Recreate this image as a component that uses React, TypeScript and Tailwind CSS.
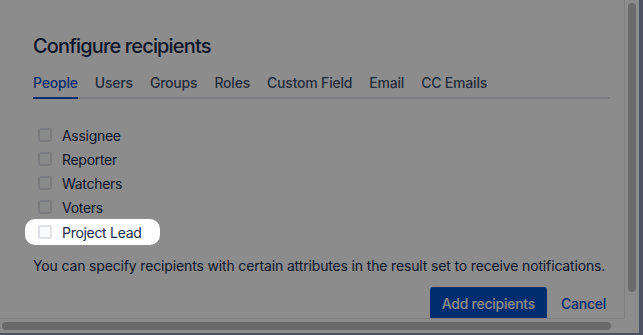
import React from "react";

const tabs = ["People", "Users", "Groups", "Roles", "Custom Field", "Email", "CC Emails"];
const people = ["Assignee", "Reporter", "Watchers", "Voters"];

function Checkbox() {
  return <span className="w-[14px] h-[14px] shrink-0 rounded-[3px] border-2 border-[#dfe1e6] bg-[#fafbfc]" />;
}

export default function App() {
  return (
    <div
      className="relative w-[643px] h-[335px] overflow-hidden bg-white flex flex-col text-[#172b4d]"
      style={{ fontFamily: "Inter, 'Noto Sans', sans-serif" }}
    >
      <div className="flex h-[333px]">
        <div className="w-[639px] flex flex-col">
          <div className="flex h-[322px]">
            {/* dialog body */}
            <div className="w-[625px] h-[319px] border-r border-b border-[#e7e7e7] overflow-hidden pl-[33px] pr-[14px] pt-[34px]">
              <h2 className="text-[20px] leading-6 font-medium tracking-[-0.85px]">Configure recipients</h2>

              <div className="mt-[15px] flex gap-[17px] border-b-2 border-[#dfe1e6] text-[14px] leading-5 font-medium tracking-[-0.2px] text-[#42526e]">
                {tabs.map((t, i) => (
                  <div
                    key={t}
                    className={
                      i === 0
                        ? "pb-[4px] -mb-[2px] border-b-2 border-[#0052cc] text-[#0052cc]"
                        : "pb-[4px] -mb-[2px] border-b-2 border-transparent"
                    }
                  >
                    {t}
                  </div>
                ))}
              </div>

              <div className="mt-[24px] flex flex-col text-[14px] tracking-[-0.3px]">
                {people.map((p) => (
                  <label key={p} className="h-6 flex items-center gap-[10px] pl-[5px]">
                    <Checkbox />
                    <span>{p}</span>
                  </label>
                ))}
                <label className="relative z-20 w-fit h-[26px] -ml-[8px] pl-[13px] pr-[18px] flex items-center gap-[10px] rounded-[10px] bg-white">
                  <Checkbox />
                  <span>Project Lead</span>
                </label>
              </div>

              <p className="mt-[11px] text-[14px] leading-5 tracking-[-0.15px] whitespace-nowrap">
                You can specify recipients with certain attributes in the result set to receive notifications.
              </p>

              <div className="mt-[11px] flex justify-end items-center gap-[14px] pr-[4px] text-[14px] font-medium tracking-[-0.25px]">
                <button className="h-8 px-3 rounded-[3px] bg-[#0052cc] text-white">Add recipients</button>
                <button className="text-[#0052cc]">Cancel</button>
              </div>
            </div>

            {/* vertical scrollbar */}
            <div className="flex-1 pl-[3px] pt-[3px]">
              <div className="w-2 h-[289px] rounded-full bg-[#c2c2c2]" />
            </div>
          </div>

          {/* horizontal scrollbar */}
          <div className="pl-[2px]">
            <div className="w-[609px] h-2 rounded-full bg-[#c2c2c2]" />
          </div>
        </div>
        <div className="relative z-20 w-[4px] bg-[#4b5361]" />
      </div>
      <div className="relative z-20 h-[2px] bg-[#4b5361]" />

      <div className="absolute inset-0 z-10 bg-black/45" />
    </div>
  );
}
